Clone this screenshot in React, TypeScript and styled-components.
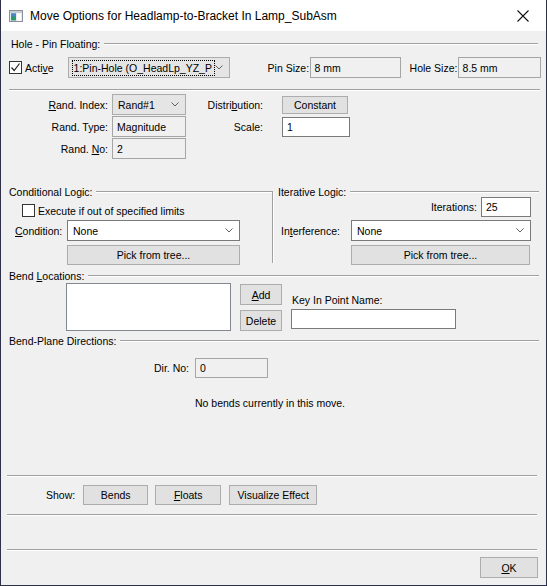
import React from 'react';
import styled, { createGlobalStyle } from 'styled-components';

const GlobalStyle = createGlobalStyle`
  html, body {
    margin: 0;
    padding: 0;
    background: #ffffff;
  }
  * {
    box-sizing: border-box;
  }
`;

const Window = styled.div`
  width: 547px;
  height: 586px;
  display: flex;
  flex-direction: column;
  border: 1px solid #2e3149;
  border-top: none;
  font-family: 'Liberation Sans', Arial, sans-serif;
  font-size: 10.5px;
  color: #000;
  background: #f0f0f0;
  overflow: hidden;
`;

const TitleBar = styled.div`
  height: 31px;
  flex: none;
  display: flex;
  align-items: center;
  background: #ffffff;
  padding-left: 8px;
`;

const TitleText = styled.span`
  margin-left: 7px;
  font-size: 12px;
  color: #000;
  flex: 1;
`;

const CloseButton = styled.div`
  width: 46px;
  height: 31px;
  display: flex;
  align-items: center;
  justify-content: center;
`;

const Body = styled.div`
  flex: 1;
  display: flex;
  flex-direction: column;
  background: #f0f0f0;
`;

const GroupHeader = styled.div<{ $mt: number; $pl?: number }>`
  height: 14px;
  margin-top: ${p => p.$mt}px;
  padding-left: ${p => p.$pl ?? 8}px;
  display: flex;
  align-items: center;
  white-space: nowrap;
`;

const HeaderLine = styled.div<{ $mr?: number }>`
  flex: 1;
  height: 2px;
  margin-left: 4px;
  margin-right: ${p => p.$mr ?? 7}px;
  border-top: 1px solid #a0a0a0;
  border-bottom: 1px solid #ffffff;
`;

const Separator = styled.div<{ $mt: number; $ml?: number; $mr?: number }>`
  height: 2px;
  margin-top: ${p => p.$mt}px;
  margin-left: ${p => p.$ml ?? 6}px;
  margin-right: ${p => p.$mr ?? 9}px;
  border-top: 1px solid #a0a0a0;
  border-bottom: 1px solid #ffffff;
`;

const Row = styled.div<{ $mt: number; $pl?: number; $pr?: number; $h?: number; $end?: boolean }>`
  display: flex;
  align-items: center;
  justify-content: ${p => (p.$end ? 'flex-end' : 'flex-start')};
  margin-top: ${p => p.$mt}px;
  padding-left: ${p => p.$pl ?? 0}px;
  padding-right: ${p => p.$pr ?? 0}px;
  height: ${p => p.$h ?? 21}px;
  white-space: nowrap;
`;

const Label = styled.span<{ $w?: number; $right?: boolean; $ml?: number }>`
  display: inline-block;
  flex: none;
  ${p => (p.$w ? `width: ${p.$w}px;` : '')}
  margin-left: ${p => p.$ml ?? 0}px;
  text-align: ${p => (p.$right ? 'right' : 'left')};
  white-space: nowrap;
`;

const Key = styled.span`
  text-decoration: underline;
`;

const CheckBox = styled.span<{ $ml?: number }>`
  width: 13px;
  height: 13px;
  margin-left: ${p => p.$ml ?? 0}px;
  margin-right: 3px;
  border: 1px solid #333333;
  background: #ffffff;
  display: inline-flex;
  align-items: center;
  justify-content: center;
  flex: none;
`;

const Field = styled.div<{
  $w: number;
  $h?: number;
  $ml?: number;
  $white?: boolean;
}>`
  width: ${p => p.$w}px;
  height: ${p => p.$h ?? 21}px;
  margin-left: ${p => p.$ml ?? 0}px;
  flex: none;
  display: flex;
  align-items: center;
  padding-left: 4px;
  background: ${p => (p.$white ? '#ffffff' : '#f0f0f0')};
  border: 1px solid ${p => (p.$white ? '#7a7a7a' : '#a5a5a5')};
  overflow: hidden;
  white-space: nowrap;
`;

const Combo = styled.div<{ $w: number; $ml?: number; $white?: boolean }>`
  width: ${p => p.$w}px;
  height: 21px;
  margin-left: ${p => p.$ml ?? 0}px;
  flex: none;
  display: flex;
  align-items: center;
  padding: 0 6px 0 3px;
  background: ${p => (p.$white ? '#ffffff' : '#e5e5e5')};
  border: 1px solid ${p => (p.$white ? '#7a7a7a' : '#acacac')};
  overflow: hidden;
  white-space: nowrap;
`;

const ComboText = styled.span<{ $focus?: boolean }>`
  flex: 1;
  overflow: hidden;
  padding: 1px 1px;
  border: 1px ${p => (p.$focus ? 'dotted #000' : 'solid transparent')};
`;

const Button = styled.div<{ $w: number; $h?: number; $ml?: number }>`
  width: ${p => p.$w}px;
  height: ${p => p.$h ?? 20}px;
  margin-left: ${p => p.$ml ?? 0}px;
  flex: none;
  display: flex;
  align-items: center;
  justify-content: center;
  background: #e1e1e1;
  border: 1px solid #adadad;
  white-space: nowrap;
`;

const FormGrid = styled.div`
  margin-top: 3px;
  display: grid;
  grid-template-columns: 111px 74px 77px 87px;
  grid-auto-rows: 21px;
  row-gap: 1px;
  align-items: center;
`;

const GridLabel = styled.span<{ $pr?: number }>`
  text-align: right;
  padding-right: ${p => p.$pr ?? 0}px;
  white-space: nowrap;
`;

const GridCell = styled.div<{ $ml?: number }>`
  display: flex;
  align-items: center;
  height: 21px;
  margin-left: ${p => p.$ml ?? 0}px;
`;

const LogicRow = styled.div`
  margin-top: 26px;
  display: flex;
  height: 80px;
`;

const LeftGroup = styled.div`
  width: 272px;
  position: relative;
  display: flex;
  flex-direction: column;
  &::after {
    content: '';
    position: absolute;
    top: 7px;
    right: 0;
    bottom: 2px;
    width: 1px;
    background: #a0a0a0;
    box-shadow: 1px 0 0 #ffffff;
  }
`;

const RightGroup = styled.div`
  flex: 1;
  display: flex;
  flex-direction: column;
`;

const BendContent = styled.div`
  display: flex;
  padding-left: 65px;
  height: 48px;
`;

const ListBox = styled.div`
  width: 165px;
  height: 48px;
  background: #ffffff;
  border: 1px solid #828790;
`;

const ButtonColumn = styled.div`
  display: flex;
  flex-direction: column;
  margin-left: 9px;
  padding-top: 1px;
  gap: 5px;
`;

const KeyColumn = styled.div`
  display: flex;
  flex-direction: column;
  margin-left: 9px;
  padding-top: 11px;
`;

const KeyLabel = styled.span`
  height: 15px;
  margin-left: 1px;
`;

const Message = styled.div`
  margin-top: 18px;
  padding-left: 194px;
  height: 14px;
  line-height: 14px;
`;

const FooterRow = styled.div`
  display: flex;
  justify-content: flex-end;
  margin-top: 6px;
  padding-right: 8px;
`;

const AppIcon = () => (
  <svg width="14" height="12" viewBox="0 0 14 12">
    <rect x="0.5" y="0.5" width="13" height="11" fill="#e8ecef" stroke="#8a9099" />
    <rect x="1" y="1" width="12" height="2" fill="#c7cdd4" />
    <rect x="2" y="3.5" width="5" height="7" fill="#2d9a6b" />
    <rect x="2" y="3.5" width="5" height="3" fill="#4a86c5" />
    <rect x="8" y="3.5" width="4" height="7" fill="#ffffff" />
  </svg>
);

const CloseIcon = () => (
  <svg width="12" height="12" viewBox="0 0 12 12">
    <path d="M0.5 0.5 L11.5 11.5 M11.5 0.5 L0.5 11.5" stroke="#111" strokeWidth="1.1" />
  </svg>
);

const Chevron = () => (
  <svg width="8" height="5" viewBox="0 0 8 5" style={{ flex: 'none' }}>
    <polyline points="0.5,0.5 4,4 7.5,0.5" fill="none" stroke="#606060" strokeWidth="1" />
  </svg>
);

const Check = () => (
  <svg width="11" height="11" viewBox="0 0 11 11">
    <polyline points="1.5,5.5 4.2,8.5 9.5,1.5" fill="none" stroke="#222" strokeWidth="1.2" />
  </svg>
);

const App = () => {
  return (
    <>
      <GlobalStyle />
      <Window>
        <TitleBar>
          <AppIcon />
          <TitleText>Move Options for Headlamp-to-Bracket In Lamp_SubAsm</TitleText>
          <CloseButton>
            <CloseIcon />
          </CloseButton>
        </TitleBar>
        <Body>
          <GroupHeader $mt={6} $pl={10}>
            <span>Hole - Pin Floating:</span>
            <HeaderLine $mr={8} />
          </GroupHeader>
          <Row $mt={6} $pl={8}>
            <CheckBox>
              <Check />
            </CheckBox>
            <Label>
              Acti<Key>v</Key>e
            </Label>
            <Combo $w={162} $ml={14}>
              <ComboText $focus>1:Pin-Hole (O_HeadLp_YZ_P</ComboText>
              <Chevron />
            </Combo>
            <Label $ml={38} $w={42}>
              Pin Size:
            </Label>
            <Field $w={91}>8 mm</Field>
            <Label $ml={9} $w={48}>
              Hole Size:
            </Label>
            <Field $w={83}>8.5 mm</Field>
          </Row>
          <Separator $mt={11} $ml={8} $mr={6} />
          <FormGrid>
            <GridLabel $pr={4}>
              <Key>R</Key>and. Index:
            </GridLabel>
            <GridCell>
              <Combo $w={74}>
                <ComboText>Rand#1</ComboText>
                <Chevron />
              </Combo>
            </GridCell>
            <GridLabel>
              Distri<Key>b</Key>ution:
            </GridLabel>
            <GridCell $ml={19}>
              <Button $w={66} $h={18}>Constant</Button>
            </GridCell>

            <GridLabel $pr={4}>Rand. Type:</GridLabel>
            <GridCell>
              <Field $w={74}>Magnitude</Field>
            </GridCell>
            <GridLabel>Scale:</GridLabel>
            <GridCell $ml={19}>
              <Field $w={68} $h={20} $white>
                1
              </Field>
            </GridCell>

            <GridLabel $pr={4}>
              Rand. <Key>N</Key>o:
            </GridLabel>
            <GridCell>
              <Field $w={74}>2</Field>
            </GridCell>
          </FormGrid>

          <LogicRow>
            <LeftGroup>
              <GroupHeader $mt={0}>
                <span>Conditional Logic:</span>
                <HeaderLine $mr={0} />
              </GroupHeader>
              <Row $mt={4} $h={15} $pl={21}>
                <CheckBox />
                <Label>Execute if out of specified limits</Label>
              </Row>
              <Row $mt={2} $pl={14}>
                <Label $w={52}>
                  <Key>C</Key>ondition:
                </Label>
                <Combo $w={173} $white>
                  <ComboText>None</ComboText>
                  <Chevron />
                </Combo>
              </Row>
              <Row $mt={4} $h={20} $pl={66}>
                <Button $w={173}>Pick from tree...</Button>
              </Row>
            </LeftGroup>
            <RightGroup>
              <GroupHeader $mt={0} $pl={5}>
                <span>Iterative Logic:</span>
                <HeaderLine />
              </GroupHeader>
              <Row $mt={-2} $h={20} $end $pr={15}>
                <Label>Iterations:</Label>
                <Field $w={50} $h={20} $ml={4} $white>
                  25
                </Field>
              </Row>
              <Row $mt={3} $pl={8}>
                <Label $w={70}>
                  In<Key>t</Key>erference:
                </Label>
                <Combo $w={180} $white>
                  <ComboText>None</ComboText>
                  <Chevron />
                </Combo>
              </Row>
              <Row $mt={4} $h={20} $pl={78}>
                <Button $w={179}>Pick from tree...</Button>
              </Row>
            </RightGroup>
          </LogicRow>

          <GroupHeader $mt={4}>
            <span>
              Bend <Key>L</Key>ocations:
            </span>
            <HeaderLine />
          </GroupHeader>
          <BendContent>
            <ListBox />
            <ButtonColumn>
              <Button $w={42} $h={21}>
                <Key>A</Key>dd
              </Button>
              <Button $w={42} $h={21}>Delete</Button>
            </ButtonColumn>
            <KeyColumn>
              <KeyLabel>Key In Point Name:</KeyLabel>
              <Field $w={165} $h={20} $white />
            </KeyColumn>
          </BendContent>

          <GroupHeader $mt={3}>
            <span>Bend-Plane Directions:</span>
            <HeaderLine />
          </GroupHeader>
          <Row $mt={10} $h={20} $pl={142}>
            <Label $w={46} $right>
              Dir. No:
            </Label>
            <Field $w={73} $h={20} $ml={6}>
              0
            </Field>
          </Row>
          <Message>No bends currently in this move.</Message>

          <Separator $mt={65} />
          <Row $mt={8} $h={20} $pl={45}>
            <Label>Show:</Label>
            <Button $w={65} $ml={8}>Bends</Button>
            <Button $w={66} $ml={7}>
              <Key>F</Key>loats
            </Button>
            <Button $w={88} $ml={8}>Visualize Effect</Button>
          </Row>
          <Separator $mt={9} />
          <Separator $mt={33} />
          <FooterRow>
            <Button $w={58} $h={21}>
              <Key>O</Key>K
            </Button>
          </FooterRow>
        </Body>
      </Window>
    </>
  );
};

export default App;
